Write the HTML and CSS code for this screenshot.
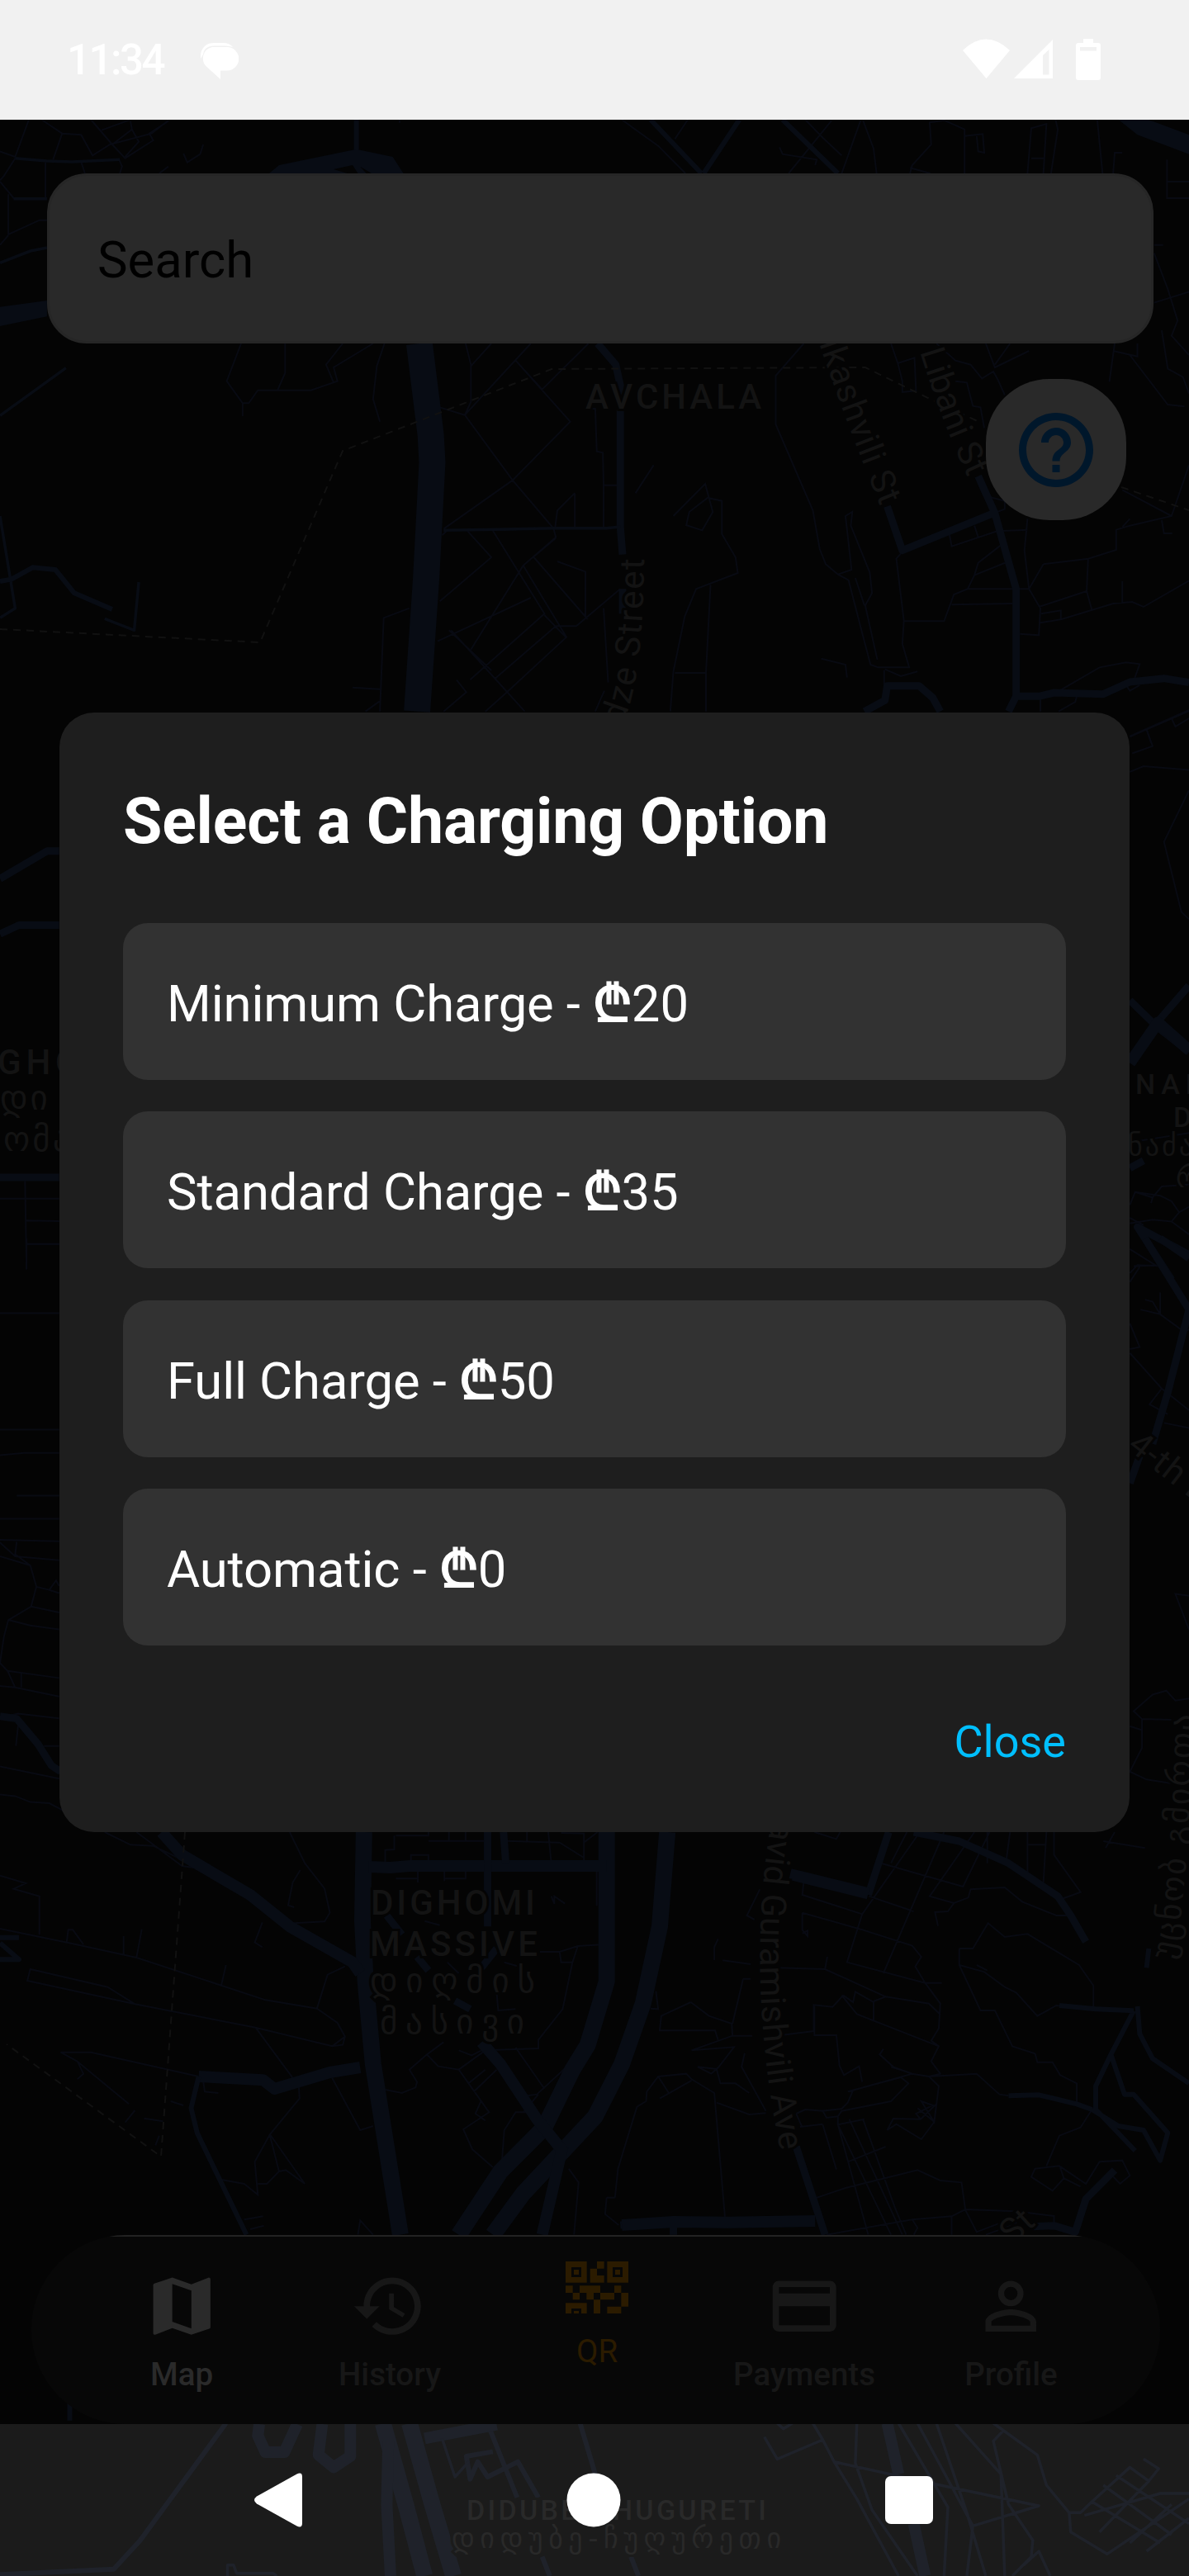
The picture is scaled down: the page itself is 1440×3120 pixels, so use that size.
FILE: index.html
```html
<!DOCTYPE html>
<html lang="en">
<head>
<meta charset="utf-8">
<title>Charging map</title>
<link rel="stylesheet" href="styles.css">
</head>
<body>
<div class="screen">
  <svg class="map" viewBox="0 0 1440 3120" aria-hidden="true">
    <g class="thin">
      <g transform="scale(.91837 .33333)">
        <path d="M38 435L20 570L0 550M55 435L82 485L107 490L122 565L145 525L200 485L222 437M82 485L70 580M120 435L148 525L165 575L202 510L197 485L222 440M148 525L174 470L183 515L165 570M134 473L170 437M174 470L172 440M60 590V720H18L0 660M20 575L5 640L0 655M107 588L112 630M157 580L161 605L158 630M268 525L264 560L247 590L242 558M222 605L210 630M527 435V446M11 706V852L52 800H62M11 855L0 890M820 435L868 530L904 630M907 435L890 505M1062 435L1085 500L1110 565M1097 437L1040 630M1135 437L1110 630M1138 437L1152 540L1156 630M1075 600L1077 580L1032 560L1028 535M1227 630L1200 610M1200 630L1203 600L1228 525L1226 445L1245 437L1272 470V630M1272 494L1296 487L1298 555L1290 550L1288 495M1355 630L1360 466L1380 450L1376 630M1360 575H1378M1392 435L1395 470L1386 630M1447 435L1454 630M1480 555H1470L1468 630M1539 580V720H1568M1539 660H1568M1522 890H1534M1522 920L1540 1050L1553 1165L1545 1220L1568 1290M1522 1100L1568 1060"/>
      </g>
      <g transform="translate(0 400) scale(.91837 .33333)">
        <path d="M318 48L299 185L320 265V312M320 265H328L340 218H410L445 185L440 135L492 48M376 48V155L366 218M452 48L430 125L440 190M507 48L497 130L492 250L501 332M614 48L621 125V260L613 308L580 280M648 48L621 130M700 48L613 308L676 545L730 720L733 752L690 855L621 1160M680 110L752 332L676 545L585 722M680 110L715 215L776 48M776 285H785L787 440L795 445L796 563H815M796 563V715M862 490L838 592M758 592V718M758 592L735 655L732 718M590 727L655 725L735 719H800L818 714M590 727L583 745M616 728L648 825L580 985M650 728L718 1030L620 1270M704 825L775 1050M735 840L772 877V1040M733 755L703 825M577 1130L700 972M595 1090L643 1236L692 1385M592 1090L648 1236M690 855L747 1115L668 1316L640 1385M718 1035L746 1115M733 1075L653 1265M818 940L760 1075L733 1075M602 1270L615 1315L585 1385M540 1010L506 1045L501 1385M465 1298L501 1304M502 1345L482 1385M796 1010L802 1280M797 1310L785 1385M888 675L930 558L935 610L952 620V740L970 825L973 882L918 940L903 1040L888 1240L884 1385M935 605L909 660L905 708L926 727L940 660L935 610M937 925L931 1245H890M931 1245V1385M1060 48L1023 165V342L1072 655L1081 795L1089 850L1105 887L1119 908L1137 1100L1148 1215L1158 1225H1199L1190 1140L1192 1055L1182 830L1190 805M1105 887L1123 870L1115 675L1124 660L1122 710L1147 880L1150 955L1141 1000L1157 1197M1128 900L1140 1000M1083 1193L1115 1215L1117 1262M1167 1232L1188 1257L1210 1240M1166 1235V1290M1192 1057H1245L1258 960L1276 940H1357M1255 997L1335 993M1252 740L1255 785L1315 730L1355 725M1285 710L1290 752M1325 770L1290 845L1285 890L1276 940M1355 685L1351 800L1357 940L1372 1010L1370 1108L1345 1103M1330 840L1285 890M1376 850L1435 830L1472 798V725L1490 710L1545 675L1568 490M1490 685L1480 715M1480 580L1545 675M1376 850L1357 940M1435 830L1433 948L1370 1005M1433 948L1440 1017M1480 912V993M1372 1063L1400 1050L1468 993L1493 987L1508 1005L1568 910M1373 1030L1399 1018V1050M1532 690L1535 738H1546M1397 1310L1450 1225L1485 1207L1503 1213L1493 1290M1503 1290L1490 1310L1483 1280M1420 1330L1418 1350L1396 1385M1372 1340V1385M1175 48L1184 120L1206 100L1208 220L1190 225V185L1184 120M1235 48L1260 110L1280 125L1295 175L1310 150L1316 180L1325 235M1300 48L1312 135L1357 75M1332 48L1312 125M1260 185L1275 190L1283 275L1293 280L1298 355M1290 555L1297 600L1325 620V650L1315 660M1470 48L1463 187M1532 0L1540 140L1560 170L1568 230M1500 48V95L1468 75M1490 90L1540 270L1562 277M1490 1475L1568 1380M1545 1410L1550 1440L1568 1410M1512 1450L1518 1500"/>
      </g>
      <g transform="translate(0 850) scale(.91837 .44643)">
        <path d="M0 1348H78M33 1300L35 1540M35 1407L78 1409M35 1471H78M1490 95L1512 75L1568 25M1512 75L1520 120L1493 140M1490 190L1508 175L1568 185M1568 240L1535 380L1558 570L1568 590M1490 1195L1568 1170M1490 1365L1497 1330L1520 1345L1518 1360M1497 1330L1530 1340L1545 1355L1555 1385L1568 1370M1520 1345L1532 1315L1568 1310M1490 1400L1508 1420M1545 1410L1568 1445M1490 1415L1520 1405L1545 1410L1555 1385M1490 1485L1525 1530L1500 1528L1490 1550"/>
      </g>
      <g transform="translate(0 1500) scale(.91837 .47832)">
        <path d="M35 0V78M35 14H78M0 189H78M0 484H78M0 549L32 543H78M22 651H78M0 710H78M0 763L78 767M0 770L20 805L78 815M22 768L20 800L40 828L48 882L41 932L11 966L5 1010L0 1075L10 1095L20 1137L78 1160M0 805L40 828M48 882L65 890L74 866L78 880M65 890L78 898M41 932L78 947M11 966L40 980L78 990M28 1100V1137M10 1095L78 1113M0 1133L20 1137M0 1213L24 1203L78 1215M25 1215L21 1285M58 1285H78M0 1337L78 1368M0 1408L20 1412L40 1427L65 1430L85 1450M1504 180L1530 192L1520 160L1510 155M1530 192V137M1530 192L1562 237L1568 230M1490 215L1503 275L1490 280M1490 290L1532 380L1568 435M1532 380L1516 420L1540 445M1535 467L1568 480M1568 905L1550 900L1568 990M1568 1165L1550 1170L1538 1145L1520 1155L1495 1197L1506 1217L1568 1220M1506 1217V1290L1490 1350L1512 1370L1545 1380M1490 1235L1506 1245M1495 70L1525 68M1490 110L1503 72"/>
      </g>
      <g transform="translate(0 2200) scale(.91837 .33333)">
        <path d="M138 57L172 103L202 107L265 190M180 57L240 180L265 190M382 57L402 170L428 262L435 350L428 382L388 388M396 195L386 240L380 323L388 330M346 385L336 458L346 475M0 215L34 243L18 263L52 290V430M0 408L95 462L180 513L350 667L418 698L445 750L455 800L452 830L438 835L337 767L178 682L36 597L40 555L142 620L178 682M88 455L90 412H96L110 465M163 435V505M187 410L180 513M298 540L292 612M455 545L432 575L418 698M455 800L438 835M337 767L394 980L395 1025L356 1155L336 1255L340 1375L322 1335L292 1320M356 1155L402 1335L377 1285L368 1290L352 1335H340M368 1290L356 1160M438 950L475 1140L492 1125M225 1035L242 1050M190 1097L215 1108M178 1068L165 1112M268 960L270 1000L288 1005M102 890L170 1045M262 945L120 857H80L102 890L110 935L102 955M210 1160L205 1195M322 1465L347 1453M330 1500L348 1487M492 1520L475 1468L472 1520M522 70H565V57M520 70V120L508 122V178M542 178V140H565V175M565 89H640M592 57V89M614 57V89M522 226H551M585 226H615M551 190V240M586 190V235M614 190V226M668 89L738 95L770 150M695 57V89M723 57L727 170M740 60L770 62V170M770 95L788 57M787 190V325M727 290L731 318V290L745 317M712 492H738L762 471L793 466M738 492L740 530H755L762 471M755 530L742 700L710 812V843L640 850L605 920L578 908L563 865L585 820M563 865L540 920L550 965L548 985L530 1005L508 993M605 920L645 1075L611 1137L623 1210L650 1275M605 850L622 868L635 850M640 920L618 970M655 920L625 1000M635 1030L627 1080L640 1105M680 840L718 990M710 1010L690 1075M755 890L708 1010L695 1015M695 1075H680L665 1140L662 1250M655 640L657 705L680 700M580 395L560 380M590 530L605 570M690 550L665 530M750 1280L763 1330L757 1520M800 1385L798 1445L816 1485M811 1385H800M811 1385L815 1280L840 1055L852 1035L853 1000L868 945L905 935L912 955L942 1005L956 1455M912 960L870 1025M868 945L882 1005M945 1040L988 1083L1010 1078M911 675L872 725L870 778H943L947 812M911 675L935 725L965 753L966 797L912 850L968 838L948 910L938 935L920 910L945 918L950 970H970L988 1005M965 797H992M1010 1070L978 910L982 860M947 445L942 475V522M953 523L990 537M1025 550L1088 555L1168 655M865 635L868 700L858 698M1030 795L1073 780V685L1098 692L1112 650M980 590L966 753M990 590H980M1060 235L1058 285L1137 355M1058 350L1135 410L1203 470L1215 510L1207 545L1220 605L1240 680L1238 770L1228 815L1238 835L1228 890L1240 935L1225 945M1058 350V412L1065 435V415L1058 425M1002 265L985 360L995 375M1074 57L1103 82L1108 57M1146 290L1205 345M1162 170L1270 255L1305 57M1196 57L1175 170M1213 57L1137 355L1117 530L1220 605H1242M1245 57L1165 570M1285 57L1226 290L1258 315L1277 295L1280 265L1325 258L1348 310L1393 360H1412M1258 315L1250 345L1233 348L1237 398M1091 510L1088 555M1302 57V170M1332 57L1327 160M1355 57V205M1380 57L1376 240M1355 103H1380M1390 57V140L1425 275L1400 300M1110 650L1130 718L1238 835M1112 650L1125 675L1128 637L1152 675V740M1152 672L1168 655L1225 680L1240 720M1074 690V795H1103L1107 905L1113 940L1133 908L1137 965M1165 845L1160 865L1178 910L1203 935L1225 945L1238 980L1232 1110L1215 1035L1230 1050L1208 1080L1214 1100L1235 1045M1175 910L1203 935L1125 995L1118 1040L1110 1062L1085 1070L1090 1095L1105 1090L1110 1070L1175 1035L1198 970L1188 948L1118 1000M1050 1080L1062 1065L1085 1070M1055 1128L1085 1118M1050 1080L1058 1130M1140 1100L1105 1120L1175 1520M1120 1100L1190 1520M1138 1100L1180 1420L1195 1520M1085 1120L1103 1283M1105 1090V1120L1145 1520M1168 1200L1118 1255M1225 945L1288 935L1318 1010L1330 1015M1214 1100L1178 1098L1170 1140L1182 1118L1215 1173L1232 1110L1210 1060M1072 1390L1115 1350L1210 1285L1240 1323L1268 1330L1273 1428L1340 1435L1390 1452V1480M1273 1428L1255 1453L1203 1465L1090 1520M1255 1453V1520M1203 1465L1210 1495L1205 1520M1273 1430L1288 1510L1340 1455V1480M1300 1520L1340 1480M1265 480H1283L1303 388L1325 438L1355 427L1423 540L1442 615V695M1265 480V540L1293 705H1312L1335 835L1365 862L1368 893H1388L1398 940L1420 970V1045M1265 540L1298 565L1325 620L1340 640L1368 725L1393 687L1445 700L1495 706M1288 540L1302 560M1440 1065L1425 1130L1397 1160L1380 1270M1380 1275L1365 1280L1360 1310L1388 1360L1403 1315L1425 1345M1380 1275L1397 1270L1432 1335L1450 1255L1480 1250L1490 1305L1477 1335L1465 1300M1403 1315L1398 1275M1455 90L1510 115M1458 115L1470 57"/>
      </g>
    </g>
    <g class="road">
      <g transform="scale(.91837 .33333)">
        <path class="w6" d="M470 435V545M858 435L925 630M975 435L928 630M1032 435L1105 630"/>
        <path class="w3" d="M20 575L62 585L95 588L158 580M18 722H62M0 955L40 912L62 900M1468 75L1500 95"/>
        <path class="fill" d="M1475 435H1515L1568 490V560L1500 490ZM355 630L368 600L470 542L518 570L532 630H490L475 605L483 630H472L465 600L440 615L458 630ZM0 1115L62 1092V1150L0 1185Z"/>
      </g>
      <g transform="translate(0 400) scale(.91837 .33333)">
        <path class="w32" d="M553 48L568 380L570 480L562 900L550 1385"/>
        <path class="w8" d="M788 48L812 125L818 200V714L821 815M821 940V1030M1170 640L1190 800L1310 665M1290 530L1312 665L1340 940V1330L1330 1385M1340 1330H1370L1390 1317L1455 1322L1490 1278L1535 1265L1568 1280"/>
        <path class="w8" d="M1140 1385L1167 1345L1170 1292H1212L1230 1335L1240 1385"/>
        <path class="w3" d="M585 727L655 724L730 719H800L818 714M87 137L0 310M0 675L20 1010L0 1045M183 915L177 1090L138 1048"/>
        <path class="w6" d="M0 912L15 905L43 862L73 870L98 955L148 1014"/>
      </g>
      <g transform="translate(0 850) scale(.91837 .44643)">
        <path class="w8" d="M0 480L62 405H78M0 630L25 606H78M0 1290H78M1490 810L1525 880L1568 950M1490 970L1528 865L1568 770"/>
        <path class="w14" d="M1490 980L1527 870L1568 945"/>
        <path class="w8" d="M1568 1500L1500 1425L1545 1568M1490 1265L1508 1245"/>
      </g>
      <g transform="translate(0 1500) scale(.91837 .47832)">
        <path class="w8" d="M1510 0L1568 180L1540 390L1520 520M1503 550L1490 620M1530 0L1568 50M0 1210L22 1216L50 1280L68 1335L80 1350"/>
      </g>
      <g transform="translate(0 2200) scale(.91837 .33333)">
        <path class="w22" d="M480 57L478 380L482 600L492 900L528 1520M880 57L870 400L848 680L820 900L785 1090L690 1370L650 1520M800 57V600L775 830L755 920L718 1130L660 1290L605 1520"/>
        <path class="w14" d="M486 183L515 186L540 180H800M213 57L240 140L330 285L382 400L465 530L475 570M635 820L660 900L708 1100L742 1215M742 1200L715 1520"/>
        <path class="w8" d="M643 57V400M664 57L667 170M1172 57L1145 285M1205 57L1265 90L1330 170L1395 290L1412 360L1432 455M1050 1200L1088 1520M818 1485L888 1470M888 1480V1520M1363 1490L1390 1487L1418 1510L1432 1390L1470 1285M510 360L530 430M550 510L565 560M655 480L635 550M600 670L620 700"/>
        <path class="w14" d="M1042 210L1145 280M262 945L347 958L362 990L435 930L475 912M820 1485L888 1473L960 1475L1075 1470"/>
        <path class="w6" d="M262 945L252 1060L260 1150L325 1520M1440 1065L1475 1125L1508 1140L1530 1250L1540 1150L1495 1010L1483 1010L1465 865M1495 706L1465 865L1445 980V1065L1497 1215M1500 690L1503 790L1520 880L1568 970M1330 1015L1370 1012L1420 1045L1440 1065M1397 687L1445 700L1495 706M1515 480L1512 550M0 440H25M0 460L25 520H0"/>
      </g>
      <g transform="translate(0 2680) scale(.91837 .33333)">
        <path class="w6" d="M298 765L185 1190L150 1295L0 1315M92 690V755M765 765L785 950M715 1250L725 1320M832 1250L842 1320M645 780L682 1035M650 868L615 885L620 968L630 905L643 960L683 905L710 1035M562 830L645 780"/>
        <path class="w22" d="M505 765L535 1060L560 1320M540 765L570 1060L598 1320"/>
        <path class="w14" d="M342 768L340 810L350 870H375L392 768M425 768L420 880L440 925L462 885V768M512 830L510 1060L515 1320M560 820L655 770M1170 765L1185 950M1205 1130L1220 1320"/>
        <path class="w3" d="M583 820L600 960L618 905M1008 815L1025 895L1085 825L1072 765M1025 765L1033 785L1045 765M1100 905L1240 990L1370 1065L1283 1138M1085 825L1100 905L1130 1040L1185 1320M1130 765L1128 910L1150 1080L1210 1320M1185 765L1250 1070L1245 1320M1210 765L1283 1138L1275 1320M1235 765L1275 1090L1300 1320M1260 765L1320 950L1325 1320M1310 765L1368 880L1380 990L1410 1090L1412 1160L1460 1240L1568 1040M1322 795L1310 830L1330 1060L1362 1190L1360 1250L1335 1320M1410 1090H1425L1440 1050L1490 925L1515 975L1528 930L1508 895M1440 1050L1530 1200M1455 990L1545 1170M1472 955L1568 1130M1430 1100L1530 1020H1568M1450 1160L1515 975M1490 1200L1545 1060M1512 1230L1568 1110M1350 1280L1370 1230L1385 1320M300 1320V1280H308L312 1310H360L365 1320"/>
      </g>
    </g>
    <path class="border" d="M0 762L315 778L415 546L668 447L1048 445L1130 485L1188 512M1358 590L1440 618"/>
    <path class="border" d="M224 2219L195 2612L8 2476"/>
    <g class="label">
      <text x="709" y="495" textLength="216">AVCHALA</text>
      <text x="449" y="2319" textLength="202">DIGHOMI</text>
      <text x="448" y="2369" textLength="206">MASSIVE</text>
      <text class="geo" x="448" y="2413" textLength="203">დიღმის</text>
      <text class="geo" x="460" y="2463" textLength="178">მასივი</text>
      <text x="-3" y="1301" textLength="102">GHO</text>
      <text class="geo" x="0" y="1344">დი</text>
      <text class="geo" x="4" y="1394">ომა</text>
      <text class="small" x="1375" y="1325" textLength="86">NAD</text>
      <text class="small" x="1421" y="1365">D</text>
      <text class="geo small" x="1366" y="1399">ნაძა</text>
      <text class="geo small" x="1424" y="1438">რ</text>
      <text class="small" x="565" y="3052" textLength="366">DIDUBE-CHUGURETI</text>
      <text class="geo small" x="547" y="3086" textLength="402">დიდუბე-ჩუღურეთი</text>
    </g>
    <g class="street">
      <path id="s1" class="guide" d="M992 416Q1024 510 1068 618"/>
      <path id="s2" class="guide" d="M1114 426Q1140 510 1174 582"/>
      <path id="s3" class="guide" d="M754 878Q780 820 780 670"/>
      <path id="s4" class="guide" d="M934 2205Q901 2400 948 2620"/>
      <path id="s5" class="guide" d="M1421 2374Q1440 2290 1446 2060"/>
      <text><textPath href="#s1" textLength="212">ikashvili St</textPath></text>
      <text><textPath href="#s2" textLength="164">Libani St</textPath></text>
      <text><textPath href="#s3" textLength="206">dze Street</textPath></text>
      <text><textPath href="#s4" textLength="404">avid Guramishvili Ave</textPath></text>
      <text class="geo"><textPath href="#s5" textLength="300">უცნობ გმირთა</textPath></text>
      <text transform="translate(1364 1754) rotate(38)">4-th D</text>
      <text transform="translate(1226 2720) rotate(-42)">St</text>
    </g>
  </svg>

  <header class="status">
    <span class="time">11:34</span>
    <svg class="chat" viewBox="0 0 46 45"><path d="M14 5H32a14 14 0 0 1 0 28.500H24V44L8 29.500A14 14 0 0 1 14 5Z"/><path d="M0 19C-1 8 5 0 16 0H27Q35 0 39 5Q35 3.500 30 3.500H16Q4 4 3 14Z"/></svg>
    <svg class="signals" viewBox="0 0 170 52"><path d="M0 14Q28-13 57 14L28.500 48ZM62 48L109 1V48ZM97 20V43.500H104.500V13ZM146 0h12v5h6q3 0 3 3v39q0 3-3 3h-24q-3 0-3-3V8q0-3 3-3h6ZM142 10v4.500h20V10Z" fill-rule="evenodd"/></svg>
  </header>

  <main class="content">
    <div class="search">Search</div>
    <div class="help"><svg viewBox="0 0 24 24"><path d="M11 18h2v-2h-2v2zm1-16C6.480 2 2 6.480 2 12s4.480 10 10 10 10-4.480 10-10S17.520 2 12 2zm0 18c-4.410 0-8-3.590-8-8s3.590-8 8-8 8 3.590 8 8-3.590 8-8 8zm0-14c-2.210 0-4 1.790-4 4h2c0-1.100.9-2 2-2s2 .9 2 2c0 2-3 1.750-3 5h2c0-2.250 3-2.500 3-5 0-2.210-1.790-4-4-4z"/></svg></div>
  </main>

  <nav class="tabs">
    <div class="tab active"><svg viewBox="0 0 24 24"><path d="M20.500 3l-.16.030L15 5.100 9 3 3.360 4.900c-.21.070-.36.250-.36.480V20.500c0 .28.220.5.500.5l.16-.030L9 18.900l6 2.100 5.640-1.900c.21-.070.360-.250.360-.480V3.500c0-.28-.22-.5-.5-.5zM15 19l-6-2.110V5l6 2.110V19z"/></svg><span>Map</span></div>
    <div class="tab history"><svg viewBox="0 0 24 24"><path d="M13 3c-4.970 0-9 4.030-9 9H1l3.890 3.890.07.140L9 12H6c0-3.870 3.130-7 7-7s7 3.130 7 7-3.130 7-7 7c-1.930 0-3.680-.79-4.940-2.060l-1.420 1.420C8.270 19.990 10.510 21 13 21c4.970 0 9-4.030 9-9s-4.030-9-9-9zm-1 5v5l4.280 2.540.72-1.210-3.500-2.080V8H12z"/></svg><span>History</span></div>
    <div class="tab qr"><svg viewBox="129 117 228 189"><path fill-rule="evenodd" d="M129 117h77v77h-77zM150 138v36h36v-36zM159 147h18v18h-18zM280 117h77v77h-77zM300 138v36h36v-36zM309 147h18v18h-18zM243 117h26v26h-26zM218 143h25v25h26v26h-51zM129 205h26v26h-26zM155 231h25v25h-25zM180 205h75v26h-24v25h-26v-25h-25zM231 256h24v50h-24zM255 231h51v25h-51zM306 205h25v26h-25zM331 231h26v50h-26zM280 281h51v25h-51zM129 268h77v38h-20v-18h-36v18h-21zM159 297h18v9h-18z"/></svg><span>QR</span></div>
    <div class="tab payments"><svg viewBox="0 0 24 24"><path d="M20 4H4c-1.110 0-1.990.89-1.990 2L2 18c0 1.110.89 2 2 2h16c1.110 0 2-.89 2-2V6c0-1.110-.89-2-2-2zm0 14H4v-6h16v6zm0-10H4V6h16v2z"/></svg><span>Payments</span></div>
    <div class="tab profile"><svg viewBox="0 0 24 24"><path d="M12 5.900a2.100 2.100 0 1 1 0 4.200 2.100 2.100 0 0 1 0-4.200m0 9c2.970 0 6.100 1.460 6.100 2.100v1.100H5.900V17c0-.64 3.130-2.100 6.100-2.100M12 4a4 4 0 1 0 0 8 4 4 0 0 0 0-8zm0 9c-2.670 0-8 1.340-8 4v3h16v-3c0-2.660-5.330-4-8-4z"/></svg><span>Profile</span></div>
  </nav>

  <footer class="sysnav">
    <svg viewBox="0 0 60 66"><path d="M52.500 1.500Q59 -1.500 59 5V61Q59 67.500 52.500 64.500L4 37.500Q-2 33 4 28.500Z"/></svg>
    <svg viewBox="0 0 66 66"><circle cx="33" cy="33" r="32.500"/></svg>
    <svg viewBox="0 0 60 60"><rect x="1" y="1" width="58" height="58" rx="7"/></svg>
  </footer>

  <div class="overlay">
    <section class="dialog">
      <h1>Select a Charging Option</h1>
      <div class="options">
        <button>Minimum Charge - <span class="lari">₾</span>20</button>
        <button>Standard Charge - <span class="lari">₾</span>35</button>
        <button>Full Charge - <span class="lari">₾</span>50</button>
        <button>Automatic - <span class="lari">₾</span>0</button>
      </div>
      <button class="close">Close</button>
    </section>
  </div>
</div>
</body>
</html>
```
FILE: styles.css
```css
* { box-sizing: border-box; }
body { margin: 0; background: #040404; font-family: Roboto, "DejaVu Sans", sans-serif; }
.screen { position: relative; width: 1440px; height: 3120px; overflow: hidden; display: flex; flex-direction: column; isolation: isolate; }

.map { position: absolute; inset: 0; width: 1440px; height: 3120px; z-index: -1; }
.map path { fill: none; vector-effect: non-scaling-stroke; }
.thin path { stroke: #080a12; stroke-width: 2px; }
.road path { stroke: #080c14; stroke-linejoin: round; }
.map .fill { fill: #080c14; stroke: none; }
.road .w3 { stroke-width: 3.500px; }
.road .w6 { stroke-width: 6px; }
.road .w8 { stroke-width: 9px; }
.road .w14 { stroke-width: 14px; }
.road .w22 { stroke-width: 20px; }
.road .w32 { stroke-width: 32px; }
.map .border { stroke: #111; stroke-width: 2px; stroke-dasharray: 9 7; }
.map text { fill: #131313; stroke: #040404; stroke-width: 6px; paint-order: stroke; }
.label text { font-size: 42px; font-weight: 500; letter-spacing: 3px; }
.label .geo { font-family: "DejaVu Sans", sans-serif; font-size: 41px; font-weight: 400; }
.label .small { font-size: 34px; }
.label .geo.small { font-size: 34px; }
.street text { font-size: 42px; letter-spacing: 1px; }
.street .geo { font-family: "DejaVu Sans", sans-serif; font-size: 40px; }

.status { height: 145px; flex: none; background: #f1f1f1; color: #fff; fill: #fff; display: flex; align-items: center; padding: 0 104px 0 81px; }
.time { font-size: 51px; font-weight: 500; width: 162px; letter-spacing: -2.500px; }
.chat { width: 46px; height: 45px; margin-top: 4px; }
.signals { width: 170px; height: 52px; margin-left: auto; }

.content { height: 2562px; flex: none; padding: 65px 43px 0 57px; display: flex; flex-direction: column; }
.search { height: 206px; border-radius: 48px; background: #292929; border: 3px solid #262626; color: #000; font-size: 61.600px; line-height: 204px; padding-left: 58px; }
.help { width: 170px; height: 171px; border-radius: 77px; background: #292929; margin: 43px 33px 0 auto; display: grid; place-items: center; }
.help svg { width: 108px; height: 108px; fill: #00172b; }

.tabs { height: 229px; flex: none; margin: 0 35px 0 38px; border-radius: 115px; background: linear-gradient(#222 2px, #070707 2px); padding-top: 3px; display: grid; grid-template-columns: 364px 140px 362px 140px 361px; color: #171717; fill: #171717; font-size: 38.500px; font-weight: 500; line-height: 46px; }
.tab { display: flex; flex-direction: column; align-items: center; padding-top: 36.500px; }
.tab svg { width: 92.400px; height: 92.400px; }
.tab span { margin-top: 14px; }
.active { color: #2a2a2a; fill: #2a2a2a; }
.qr { color: #2b1b00; fill: #2b1b00; font-weight: 400; padding-top: 29px; }
.qr svg { width: 76px; height: 63px; }
.qr span { margin-top: 23px; }
.history svg { margin-left: -2px; }

.sysnav { height: 184px; flex: none; background: rgba(255,255,255,.095); fill: #fff; display: flex; align-items: center; justify-content: space-between; padding: 0 309px 0 307px; }
.sysnav svg { height: 66px; width: auto; }
.sysnav svg:last-child { height: 60px; }

.overlay { position: absolute; inset: 145px 0 184px; display: flex; align-items: center; justify-content: center; }
.dialog { width: 1296px; height: 1356px; border-radius: 42px; background: #1e1e1e; padding: 77px; display: flex; flex-direction: column; color: #fff; }
h1 { margin: 9px 0 77px; font-size: 77px; line-height: 92px; font-weight: 700; white-space: nowrap; letter-spacing: -.2px; }
.options { display: grid; gap: 38.500px; }
button { font: inherit; color: inherit; border: 0; text-align: left; }
.options button { height: 190px; border-radius: 30px; background: #323232; padding: 0 54px 0 53px; font-size: 61.600px; letter-spacing: -.1px; }
.lari { -webkit-text-stroke: 2px #fff; }
.dialog .close { background: none; color: #00bfff; padding: 0; font-size: 54px; line-height: 64px; margin: 85px 0 0; align-self: flex-end; }
```
